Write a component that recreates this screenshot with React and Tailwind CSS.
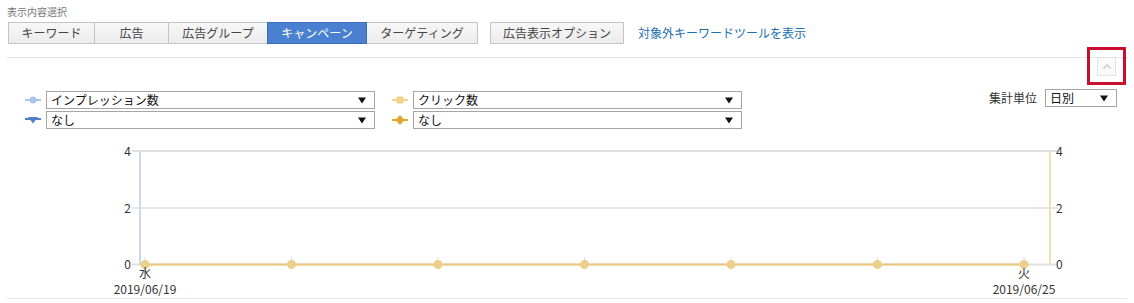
import React from 'react';

const tabs = [
  { label: 'キーワード', w: 'w-[87px]' },
  { label: '広告', w: 'w-[75px]' },
  { label: '広告グループ', w: 'w-[100px]' },
  { label: 'キャンペーン', w: 'w-[100px]', active: true },
  { label: 'ターゲティング', w: 'w-[112px]' },
];

const points = [145, 291.5, 438, 584.5, 731, 877.5, 1024];

function LegendIcon({ kind }) {
  if (kind === 'circle') {
    return (
      <svg width="16" height="10" viewBox="0 0 16 10">
        <line x1="0" y1="5" x2="16" y2="5" stroke="#a9c5ea" strokeWidth="2" />
        <circle cx="8" cy="5" r="3.5" fill="#a9c5ea" />
      </svg>
    );
  }
  if (kind === 'triangle') {
    return (
      <svg width="16" height="10" viewBox="0 0 16 10">
        <line x1="0" y1="4" x2="16" y2="4" stroke="#4f7fc8" strokeWidth="2" />
        <polygon points="3,2 13,2 8,8.5" fill="#4f7fc8" />
      </svg>
    );
  }
  if (kind === 'square') {
    return (
      <svg width="16" height="10" viewBox="0 0 16 10">
        <line x1="0" y1="5" x2="16" y2="5" stroke="#f2d38d" strokeWidth="2" />
        <rect x="4.5" y="1.5" width="7" height="7" fill="#f2d38d" />
      </svg>
    );
  }
  return (
    <svg width="16" height="12" viewBox="0 0 16 12">
      <line x1="0" y1="6" x2="16" y2="6" stroke="#e2a52b" strokeWidth="2" />
      <polygon points="8,1 12.5,6 8,11 3.5,6" fill="#e2a52b" />
    </svg>
  );
}

function FakeSelect({ value, className }) {
  return (
    <div
      className={`h-[18px] border border-[#a5a5a5] bg-white flex items-center justify-between pl-[4px] pr-[8px] text-[12px] text-[#111] leading-none ${className}`}
    >
      <span>{value}</span>
      <svg width="8" height="7" viewBox="0 0 8 7">
        <polygon points="0,0.5 8,0.5 4,6.5" fill="#111" />
      </svg>
    </div>
  );
}

export default function App() {
  return (
    <div
      className="relative w-[1134px] h-[303px] bg-white text-[#333] overflow-hidden"
      style={{ fontFamily: '"Noto Sans CJK JP", "Noto Sans", sans-serif' }}
    >
      {/* header tabs */}
      <div className="pt-[5px] px-[7px]">
        <div className="text-[10px] leading-[14px] text-[#777]">表示内容選択</div>
        <div className="mt-[3px] ml-[1px] flex items-center">
          {tabs.map((t) => (
            <div
              key={t.label}
              className={`${t.w} h-[22px] -ml-px first:ml-0 flex items-center justify-center text-[12px] border ${
                t.active
                  ? 'bg-[#4a80d0] border-[#3a6cb8] text-white relative z-10'
                  : 'bg-gradient-to-b from-[#f7f7f7] to-[#ececec] border-[#c4c4c4] text-[#444]'
              }`}
            >
              {t.label}
            </div>
          ))}
          <div className="ml-[12px] w-[134px] h-[22px] flex items-center justify-center text-[12px] border border-[#c4c4c4] bg-gradient-to-b from-[#f7f7f7] to-[#ececec] text-[#444]">
            広告表示オプション
          </div>
          <span className="ml-[14px] text-[12px] text-[#1a6fb0]">対象外キーワードツールを表示</span>
        </div>
        <div className="mt-[13px] border-t border-[#e6e6e6] mr-[-1px]" />
      </div>

      {/* collapse button with highlight */}
      <div className="absolute left-[1087px] top-[47px] w-[39px] h-[38px] border-[3px] border-[#c8102e]" />
      <div className="absolute left-[1097px] top-[57px] w-[19px] h-[19px] border border-[#e2e2e2] bg-[#fafafa] flex items-center justify-center">
        <svg width="10" height="7" viewBox="0 0 10 7">
          <polyline points="1.5,5.5 5,2 8.5,5.5" fill="none" stroke="#c9c9c9" strokeWidth="1.3" />
        </svg>
      </div>

      {/* metric selectors */}
      <div className="mt-[33px] flex items-start">
        <div className="ml-[25px] flex flex-col gap-[2px]">
          <div className="flex items-center gap-[5px]">
            <LegendIcon kind="circle" />
            <FakeSelect value="インプレッション数" className="w-[329px]" />
          </div>
          <div className="flex items-center gap-[5px]">
            <LegendIcon kind="triangle" />
            <FakeSelect value="なし" className="w-[329px]" />
          </div>
        </div>
        <div className="ml-[17px] flex flex-col gap-[2px]">
          <div className="flex items-center gap-[5px]">
            <LegendIcon kind="square" />
            <FakeSelect value="クリック数" className="w-[329px]" />
          </div>
          <div className="flex items-center gap-[5px]">
            <LegendIcon kind="diamond" />
            <FakeSelect value="なし" className="w-[329px]" />
          </div>
        </div>
        <div className="ml-auto mr-[17px] -mt-[2px] flex items-center gap-[8px]">
          <span className="text-[12px] text-[#333]">集計単位</span>
          <FakeSelect value="日別" className="w-[72px]" />
        </div>
      </div>

      {/* chart */}
      <div className="mt-[10px] mx-[7px] border-b border-[#e6e6e6]">
        <svg width="1120" height="159" viewBox="7 0 1120 159" className="block">
          <line x1="132" y1="12" x2="1058" y2="12" stroke="#e0e0e0" strokeWidth="2" />
          <line x1="132" y1="69" x2="1058" y2="69" stroke="#cdcdcd" strokeWidth="1" />
          <line x1="132" y1="125.5" x2="1058" y2="125.5" stroke="#e0e0e0" strokeWidth="2" />
          <line x1="140" y1="12" x2="140" y2="126" stroke="#c9daf0" strokeWidth="2" />
          <line x1="1050" y1="12" x2="1050" y2="126" stroke="#f3dfb5" strokeWidth="2" />
          {points.map((x) => (
            <line key={`t${x}`} x1={x} y1="118" x2={x} y2="126" stroke="#dedede" strokeWidth="1" />
          ))}
          <line x1="145" y1="125.5" x2="1024" y2="125.5" stroke="#ebc978" strokeWidth="2" />
          {points.map((x) => (
            <circle key={x} cx={x} cy="125.5" r="4.5" fill="#ecd08a" />
          ))}
          <g fontSize="12" fill="#333">
            <text x="131" y="17" textAnchor="end">4</text>
            <text x="131" y="74" textAnchor="end">2</text>
            <text x="131" y="130" textAnchor="end">0</text>
            <text x="1056" y="17">4</text>
            <text x="1056" y="74">2</text>
            <text x="1056" y="130">0</text>
            <text x="145" y="139" textAnchor="middle">水</text>
            <text x="145" y="155" textAnchor="middle">2019/06/19</text>
            <text x="1024" y="139" textAnchor="middle">火</text>
            <text x="1024" y="155" textAnchor="middle">2019/06/25</text>
          </g>
        </svg>
      </div>
    </div>
  );
}
